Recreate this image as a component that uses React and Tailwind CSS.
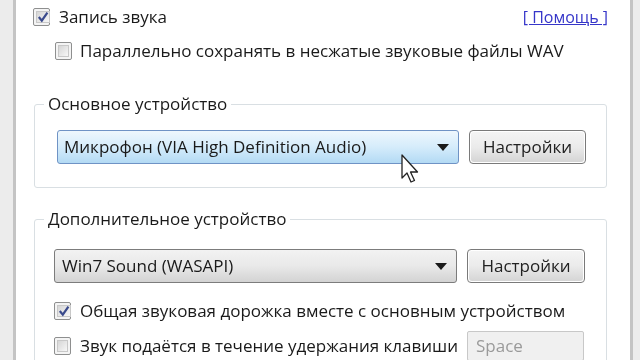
const font = { fontFamily: '"Open Sans", "Noto Sans", sans-serif' };

function Checkbox({ checked }) {
  return (
    <span className="w-[17px] h-[18px] shrink-0 border border-[#8e8f8f] rounded-[2px] bg-[#f4f4f4] p-[2px] flex">
      <span className="flex-1 border border-[#c8c8c8] bg-gradient-to-br from-[#d6d6d6] to-[#f7f7f7] flex items-center justify-center">
        {checked && (
          <svg width="12" height="12" viewBox="0 0 12 12">
            <path d="M1.8 6 L4.8 9.6 L10.4 1.6" fill="none" stroke="#3a4a8c" strokeWidth="2.2" />
          </svg>
        )}
      </span>
    </span>
  );
}

function Arrow() {
  return (
    <svg width="12" height="7" viewBox="0 0 12 7">
      <path d="M0 0 H12 L6 7 Z" fill="#1a1a1a" />
    </svg>
  );
}

function Button({ children, w }) {
  return (
    <div className={`${w} h-[34px] rounded-[4px] border border-[#7a7a7a] p-[1px]`}>
      <div className="h-full rounded-[3px] bg-gradient-to-b from-[#f4f4f4] via-[#ebebeb] to-[#d5d5d5] flex items-center justify-center text-[#222]">
        {children}
      </div>
    </div>
  );
}

export default function App() {
  return (
    <div className="w-[640px] h-[360px] overflow-hidden flex bg-[#f0f0f0] blur-[0.5px]" style={font}>
      <div className="w-[13px] bg-[#ececec]" />
      <div className="w-[3px] bg-[#c4c4c4]" />
      <div className="flex-1 bg-white relative text-[#1a1a1a] text-[17px] font-medium">
        {/* top row */}
        <div className="flex items-center pl-[17px] pr-[22px] mt-[8px] h-[18px]">
          <Checkbox checked />
          <span className="ml-[9px]">Запись звука</span>
          <a className="ml-auto text-[#3636c9] underline text-[16px]">[ Помощь ]</a>
        </div>
        <div className="flex items-center pl-[39px] mt-[16px] h-[18px]">
          <Checkbox />
          <span className="ml-[8px]">Параллельно сохранять в несжатые звуковые файлы WAV</span>
        </div>

        <fieldset className="ml-[18px] mr-[23px] mt-[34px] border border-[#d9dfe3] rounded-[3px] pl-[22px] pb-[23px]">
          <legend className="-ml-[13px] px-[4px] leading-[20px]">Основное устройство</legend>
          <div className="flex items-center gap-[10px] mt-[16px]">
            <div className="w-[402px] h-[34px] rounded-[3px] border border-[#6f93c5] bg-gradient-to-b from-[#eef7fd] via-[#d5ecfb] to-[#b3daf4] flex items-center pl-[6px] pr-[9px]">
              <span>Микрофон (VIA High Definition Audio)</span>
              <span className="ml-auto"><Arrow /></span>
            </div>
            <Button w="w-[117px]">Настройки</Button>
          </div>
        </fieldset>

        <fieldset className="ml-[18px] mr-[23px] mt-[21px] border border-[#d9dfe3] rounded-[3px] pl-[19px] h-[200px]">
          <legend className="-ml-[10px] px-[4px] leading-[20px]">Дополнительное устройство</legend>
          <div className="flex items-center gap-[10px] mt-[20px]">
            <div className="w-[403px] h-[34px] rounded-[3px] border border-[#7c7c7c] bg-gradient-to-b from-[#f2f2f2] via-[#e9e9e9] to-[#d3d3d3] flex items-center pl-[7px] pr-[9px]">
              <span>Win7 Sound (WASAPI)</span>
              <span className="ml-auto"><Arrow /></span>
            </div>
            <Button w="w-[118px]">Настройки</Button>
          </div>
          <div className="flex items-center mt-[19px] h-[18px]">
            <Checkbox checked />
            <span className="ml-[9px]">Общая звуковая дорожка вместе с основным устройством</span>
          </div>
          <div className="flex items-center mt-[11px] h-[30px]">
            <Checkbox />
            <span className="ml-[9px]">Звук подаётся в течение удержания клавиши</span>
            <div className="ml-auto mr-[22px] w-[117px] h-[30px] border border-[#c8c8c8] rounded-[2px] bg-[#f0f0f0] text-[#9a9a9a] font-normal pl-[8px] flex items-center">Space</div>
          </div>
        </fieldset>

        {/* mouse pointer */}
        <svg className="absolute left-[385px] top-[154px]" width="20" height="31" viewBox="0 0 20 31">
          <path d="M1 1 L1 24 L6 19 L10 28 L13.5 26.5 L9.5 18 L16.5 18 Z" fill="#fff" stroke="#222" strokeWidth="1.3" strokeLinejoin="round" />
        </svg>
      </div>
      <div className="w-[3px] bg-[#c4c4c4]" />
      <div className="w-[7px] bg-[#ececec]" />
    </div>
  );
}
